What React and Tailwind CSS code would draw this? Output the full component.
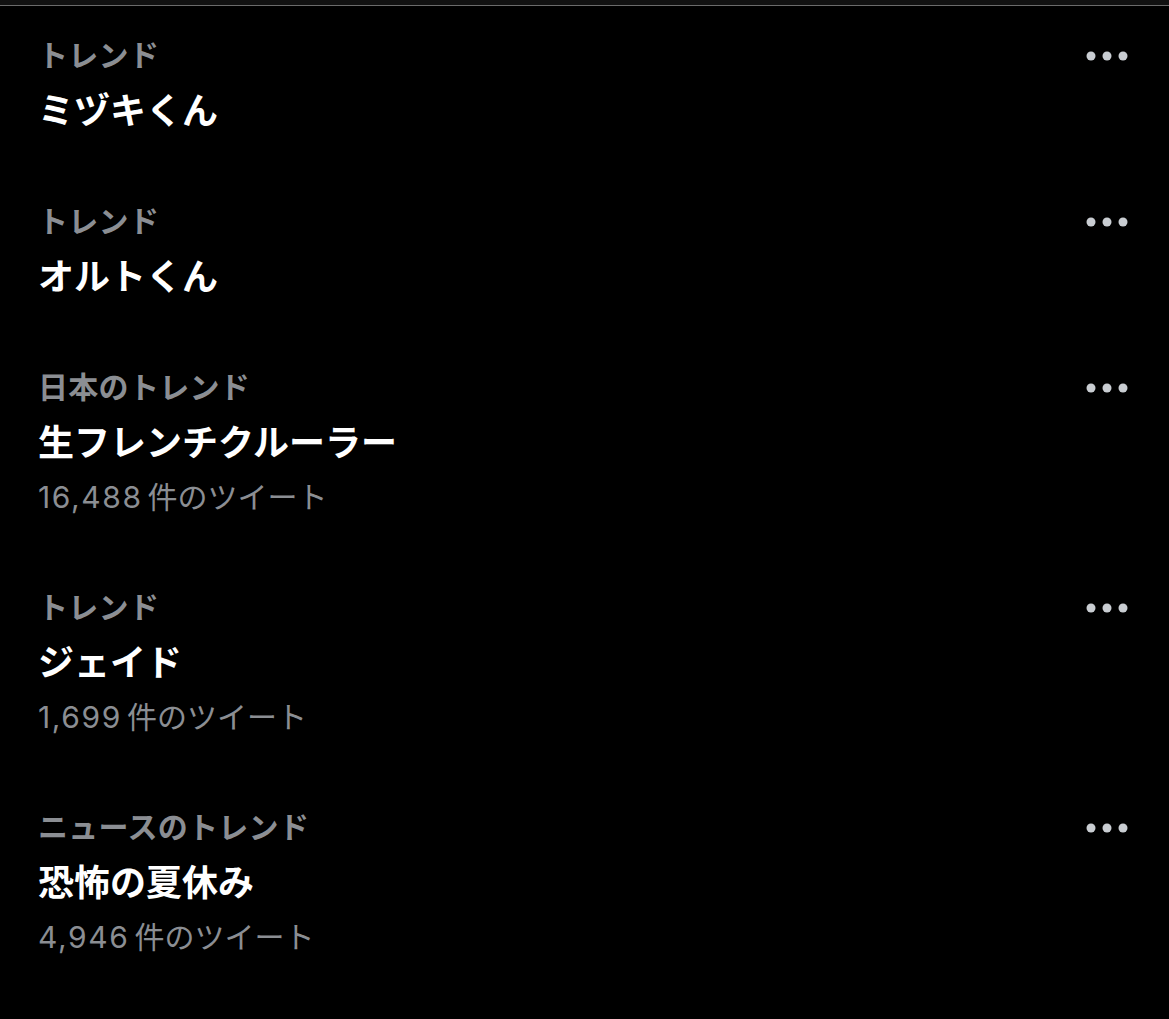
import React from "react";

const trends = [
  { label: "トレンド", title: "ミヅキくん" },
  { label: "トレンド", title: "オルトくん" },
  { label: "日本のトレンド", title: "生フレンチクルーラー", count: "16,488" },
  { label: "トレンド", title: "ジェイド", count: "1,699" },
  { label: "ニュースのトレンド", title: "恐怖の夏休み", count: "4,946" },
];

const MoreDots = () => (
  <svg width="48" height="12" viewBox="0 0 48 12" className="fill-[#c9cdd2]">
    <circle cx="8" cy="6" r="4.5" />
    <circle cx="24" cy="6" r="4.5" />
    <circle cx="40" cy="6" r="4.5" />
  </svg>
);

const TrendItem = ({ label, title, count }) => (
  <div className="flex justify-between pl-[38px] pr-[38px] pt-[27px] pb-[41px]">
    <div className="flex flex-col">
      <span className="text-[30px] leading-[40px] font-bold tracking-[0.3px] text-[#8b8e93]">{label}</span>
      <span className="text-[36px] leading-[46px] font-bold text-white mt-[12px]">{title}</span>
      {count && (
        <span className="text-[30px] leading-[40px] text-[#8b8e93] mt-[12px]">
          <span className="font-['Inter'] tracking-[1.6px]">{count}</span>
          <span className="ml-[5px]">件のツイート</span>
        </span>
      )}
    </div>
    <div className="pt-[17px]">
      <MoreDots />
    </div>
  </div>
);

export default function App() {
  return (
    <div
      className="w-[1169px] h-[1019px] bg-black overflow-hidden"
      style={{ fontFamily: '"Noto Sans CJK JP", "Noto Sans", sans-serif' }}
    >
      <div className="h-[5px] bg-[#111]" />
      <div className="h-[1px] bg-[#6b6b6b]" />
      {trends.map((t, i) => (
        <TrendItem key={i} {...t} />
      ))}
    </div>
  );
}
